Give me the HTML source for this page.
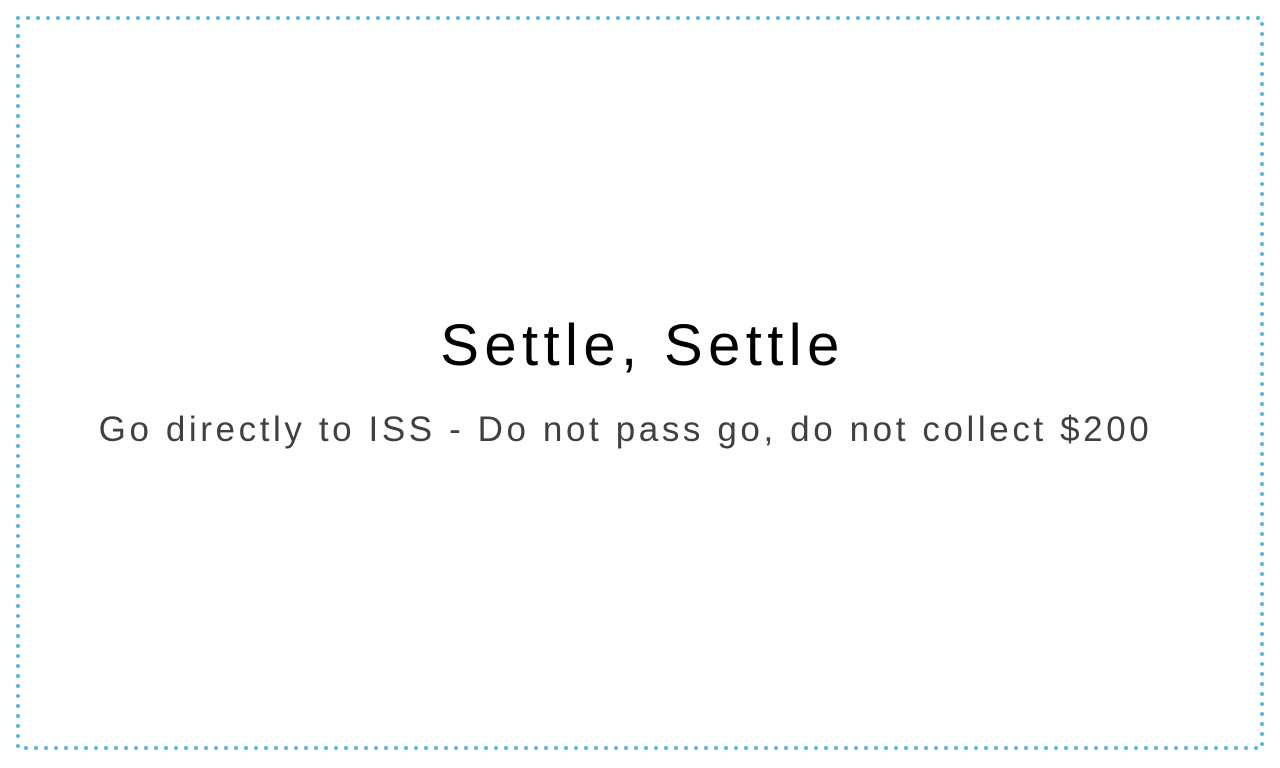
<!DOCTYPE html>
<html><head><style>
body{margin:0;width:1280px;height:768px;background:#fff;position:relative;overflow:hidden;font-family:"Liberation Sans",sans-serif}
svg{position:absolute;left:0;top:0}
.t{position:absolute;left:0;width:1280px;text-align:center;white-space:nowrap}
#a{top:312px;font-size:58px;color:#000;letter-spacing:5.4px;text-indent:5px}
#b{top:410px;font-size:35px;color:#404040;letter-spacing:3.6px;text-indent:-29px}
</style></head><body>
<svg width="1280" height="768"><rect x="18" y="18" width="1244" height="730" fill="none" stroke="#5bb8d9" stroke-width="4" stroke-linecap="round" stroke-dasharray="0 10"/></svg>
<div class="t" id="a">Settle, Settle</div>
<div class="t" id="b">Go directly to ISS - Do not pass go, do not collect $200</div>
</body></html>
